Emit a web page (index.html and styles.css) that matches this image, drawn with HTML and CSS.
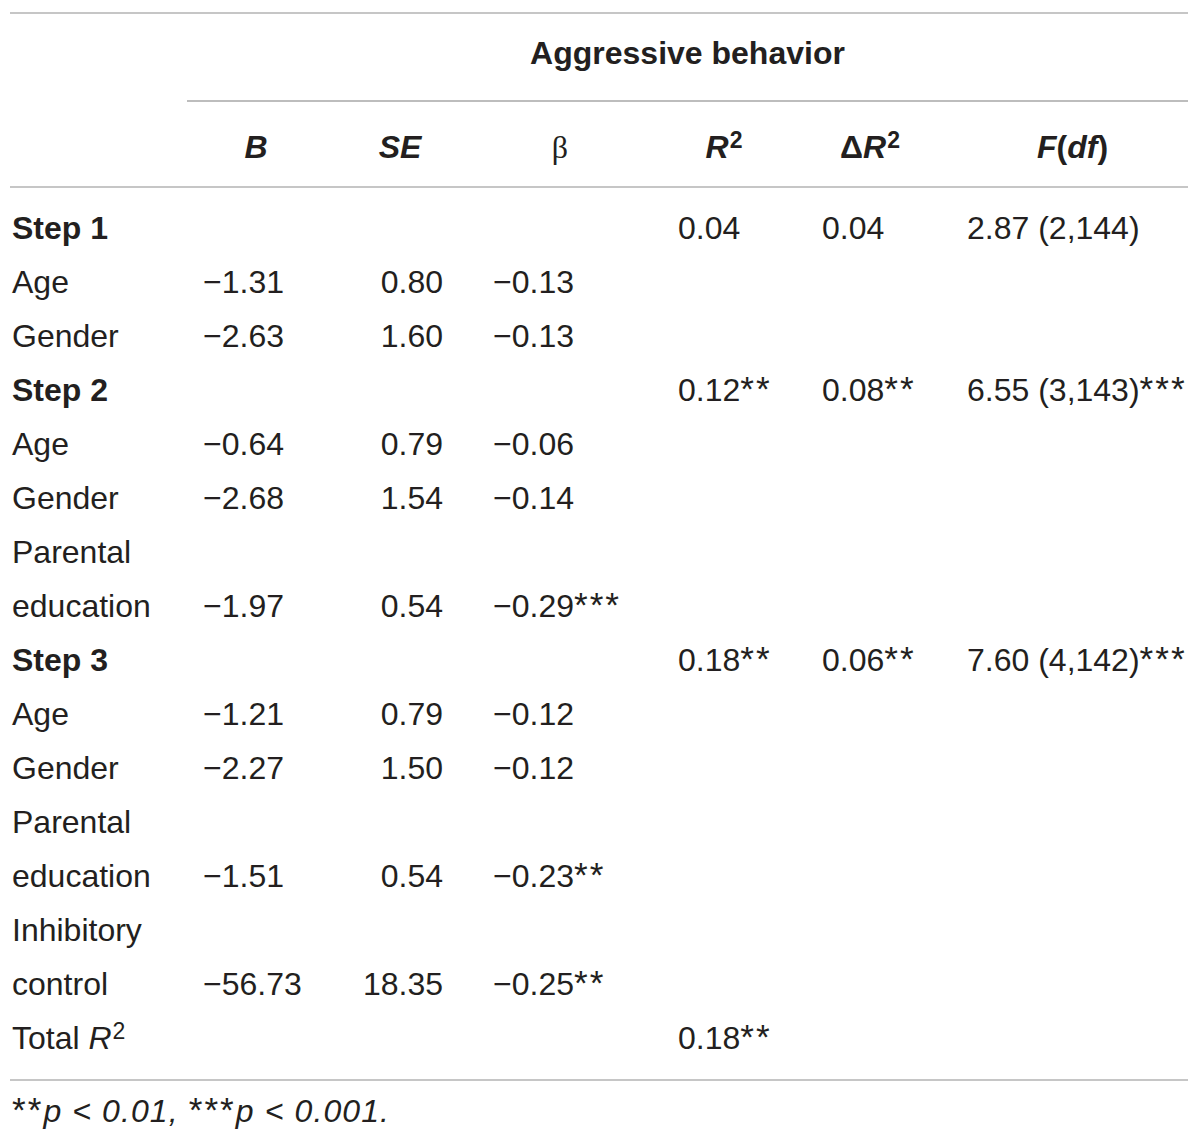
FILE: index.html
```html
<!DOCTYPE html>
<html lang="en">
<head>
<meta charset="utf-8">
<title>Aggressive behavior regression</title>
<link rel="stylesheet" href="styles.css">
</head>
<body>
<div class="table">
  <div class="thead">
    <div class="blank"></div>
    <div class="spanner">Aggressive behavior</div>
    <div class="th th-first"></div>
    <div class="th"><i>B</i></div>
    <div class="th"><i>SE</i></div>
    <div class="th beta">β</div>
    <div class="th"><i>R</i><span class="sup">2</span></div>
    <div class="th">Δ<i>R</i><span class="sup">2</span></div>
    <div class="th th-f"><i>F</i>(<i>df</i>)</div>
  </div>
  <div class="tbody">
    <div class="c0 step">Step 1</div><div class="cb"></div><div class="cse"></div><div class="cbeta"></div><div class="cr">0.04</div><div class="cd">0.04</div><div class="cf">2.87 (2,144)</div>

    <div class="c0">Age</div><div class="cb">−1.31</div><div class="cse">0.80</div><div class="cbeta">−0.13</div><div class="cr"></div><div class="cd"></div><div class="cf"></div>

    <div class="c0">Gender</div><div class="cb">−2.63</div><div class="cse">1.60</div><div class="cbeta">−0.13</div><div class="cr"></div><div class="cd"></div><div class="cf"></div>

    <div class="c0 step">Step 2</div><div class="cb"></div><div class="cse"></div><div class="cbeta"></div><div class="cr">0.12<span class="ast">**</span></div><div class="cd">0.08<span class="ast">**</span></div><div class="cf">6.55 (3,143)<span class="ast">***</span></div>

    <div class="c0">Age</div><div class="cb">−0.64</div><div class="cse">0.79</div><div class="cbeta">−0.06</div><div class="cr"></div><div class="cd"></div><div class="cf"></div>

    <div class="c0">Gender</div><div class="cb">−2.68</div><div class="cse">1.54</div><div class="cbeta">−0.14</div><div class="cr"></div><div class="cd"></div><div class="cf"></div>

    <div class="c0">Parental education</div><div class="cb">−1.97</div><div class="cse">0.54</div><div class="cbeta">−0.29<span class="ast">***</span></div><div class="cr"></div><div class="cd"></div><div class="cf"></div>

    <div class="c0 step">Step 3</div><div class="cb"></div><div class="cse"></div><div class="cbeta"></div><div class="cr">0.18<span class="ast">**</span></div><div class="cd">0.06<span class="ast">**</span></div><div class="cf">7.60 (4,142)<span class="ast">***</span></div>

    <div class="c0">Age</div><div class="cb">−1.21</div><div class="cse">0.79</div><div class="cbeta">−0.12</div><div class="cr"></div><div class="cd"></div><div class="cf"></div>

    <div class="c0">Gender</div><div class="cb">−2.27</div><div class="cse">1.50</div><div class="cbeta">−0.12</div><div class="cr"></div><div class="cd"></div><div class="cf"></div>

    <div class="c0">Parental education</div><div class="cb">−1.51</div><div class="cse">0.54</div><div class="cbeta">−0.23<span class="ast">**</span></div><div class="cr"></div><div class="cd"></div><div class="cf"></div>

    <div class="c0">Inhibitory control</div><div class="cb">−56.73</div><div class="cse">18.35</div><div class="cbeta">−0.25<span class="ast">**</span></div><div class="cr"></div><div class="cd"></div><div class="cf"></div>

    <div class="c0">Total <i>R</i><span class="sup reg">2</span></div><div class="cb"></div><div class="cse"></div><div class="cbeta"></div><div class="cr">0.18<span class="ast">**</span></div><div class="cd"></div><div class="cf"></div>
  </div>
  <div class="foot"><span class="ast">**</span><i>p &lt; 0.01,</i> <span class="ast">***</span><i>p &lt; 0.001.</i></div>
</div>
</body>
</html>
```

FILE: styles.css
```css
html, body {
  margin: 0;
  padding: 0;
  background: #ffffff;
}

body {
  font-family: "Liberation Sans", Arial, sans-serif;
  font-size: 32px;
  color: #231f20;
}

.table {
  width: 1178px;
  margin-left: 10px;
  padding-top: 12px;
  --cols: 177px 138px 150px 170px 158px 134px 251px;
}

.thead {
  display: grid;
  grid-template-columns: var(--cols);
  border-top: 2px solid #c6c6c6;
  font-weight: bold;
}

.spanner {
  grid-column: 2 / -1;
  text-align: center;
  line-height: 54px;
  padding: 12px 0 20px;
  border-bottom: 2px solid #bdbdbd;
}

.th {
  line-height: 54px;
  padding: 18px 0 12px;
  text-align: center;
  border-bottom: 2px solid #c6c6c6;
  white-space: nowrap;
}

.th-f {
  text-align: left;
  padding-left: 100px;
}

.beta {
  font-family: "Liberation Serif", "Times New Roman", serif;
  font-weight: normal;
}

.sup {
  font-size: 0.72em;
  vertical-align: 0.45em;
  line-height: 0;
  font-style: normal;
  margin-left: 1px;
}

.tbody {
  display: grid;
  grid-template-columns: var(--cols);
  padding: 13px 0 14px;
  border-bottom: 2px solid #c6c6c6;
  line-height: 54px;
}

.tbody > div {
  align-self: end;
  white-space: nowrap;
}

.tbody > .c0 {
  padding-left: 2px;
  white-space: normal;
}

.step {
  font-weight: bold;
}

.ast {
  font-size: 1.1em;
  letter-spacing: 2px;
  font-style: normal;
  line-height: 0;
}

.cb { padding-left: 16px; }
.cse { text-align: right; padding-right: 32px; }
.cbeta { padding-left: 18px; }
.cr { padding-left: 33px; }
.cd { padding-left: 19px; }
.cf { padding-left: 30px; }

.foot {
  line-height: 54px;
  padding: 3px 0 0 2px;
  letter-spacing: 1.1px;
}
```
